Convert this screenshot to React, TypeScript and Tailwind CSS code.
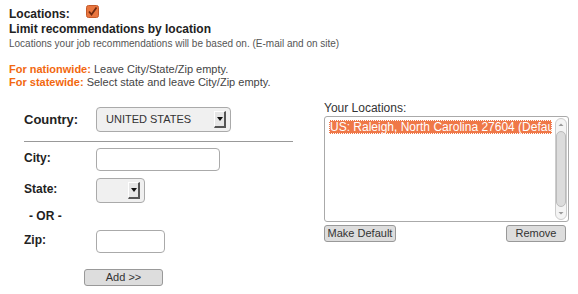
import React from 'react';

const SelectArrow = () => (
  <div className="w-[12px] h-[17px] bg-[#e6e6e6] border-t border-l border-[#fff] border-r-2 border-b-2 border-r-[#555] border-b-[#555] flex items-center justify-center">
    <svg width="6" height="4" viewBox="0 0 6 4">
      <path d="M0 0 L6 0 L3 4 Z" fill="#111" />
    </svg>
  </div>
);

const Field = ({ label, children }: { label: string; children: React.ReactNode }) => (
  <div className="flex items-center">
    <div className="w-[72px] text-[12px] font-bold mb-[4px]">{label}</div>
    {children}
  </div>
);

const App = () => {
  return (
    <div className="w-[578px] h-[294px] bg-white text-[#222] font-['Liberation_Sans',Arial,sans-serif] overflow-hidden">
      <div className="pl-[9px] pt-[5px]">
        <div className="flex items-start h-[17px]">
          <div className="w-[77px] mt-[2px] text-[12px] leading-[14px] font-bold">Locations:</div>
          <svg width="13" height="13" viewBox="0 0 13 13">
            <rect x="0.5" y="0.5" width="12" height="12" rx="2" fill="#e9763f" stroke="#c55a2b" />
            <path d="M3 6.5 L5.5 9.5 L10.5 2.5" fill="none" stroke="#6e2a10" strokeWidth="1.8" />
          </svg>
        </div>
        <div className="text-[12px] leading-[14px] font-bold">Limit recommendations by location</div>
        <div className="text-[10px] leading-[14px] text-[#555] mt-[1px]">
          Locations your job recommendations will be based on. (E-mail and on site)
        </div>
        <div className="mt-[12px] text-[11px] leading-[13px] text-[#444]">
          <div><span className="font-bold text-[#f2680f]">For nationwide:</span> Leave City/State/Zip empty.</div>
          <div><span className="font-bold text-[#f2680f]">For statewide:</span> Select state and leave City/Zip empty.</div>
        </div>
      </div>

      <div className="flex items-start">
        <div className="w-[300px] pl-[24px] pt-[18px]">
          <div className="flex items-center">
            <div className="w-[72px] text-[13px] font-bold">Country:</div>
            <div className="w-[135px] h-[25px] rounded-[4px] border border-[#aaa] bg-[#f0f0f0] flex items-center justify-between pl-[9px] pr-[4px] text-[11px] text-[#333]">
              <span>UNITED STATES</span>
              <SelectArrow />
            </div>
          </div>
          <div className="w-[269px] mt-[9px] border-t border-[#999]" />
          <div className="mt-[6px]">
            <Field label="City:">
              <div className="w-[124px] h-[23px] rounded-[4px] border border-[#aaa] bg-white" />
            </Field>
          </div>
          <div className="mt-[7px]">
            <Field label="State:">
              <div className="w-[49px] h-[25px] rounded-[4px] border border-[#aaa] bg-[#f0f0f0] flex items-center justify-end pr-[4px]">
                <SelectArrow />
              </div>
            </Field>
          </div>
          <div className="mt-[6px] pl-[5px] text-[12px] leading-[14px] font-bold">- OR -</div>
          <div className="mt-[7px]">
            <Field label="Zip:">
              <div className="w-[69px] h-[23px] rounded-[4px] border border-[#aaa] bg-white" />
            </Field>
          </div>
          <div className="mt-[16px] ml-[60px] w-[79px] h-[17px] rounded-[3px] border border-[#999] bg-[#dddddd] flex items-center justify-center text-[11px] text-[#333]">
            Add &gt;&gt;
          </div>
        </div>

        <div className="ml-[24px] w-[245px] pt-[12px]">
          <div className="text-[12px] leading-[14px] text-[#333]">Your Locations:</div>
          <div className="mt-[1px] h-[106px] rounded-[3px] border border-[#aaa] bg-white flex pl-[4px] pt-[3px] pr-[1px] pb-[1px]">
            <div className="flex-1 min-w-0">
              <div className="h-[14px] bg-[#ef7848] outline-1 outline-dotted outline-white -outline-offset-1 text-white text-[12px] leading-[14px] whitespace-nowrap overflow-hidden pl-[1px] mr-[3px]">
                US: Raleigh, North Carolina 27604 (Default)
              </div>
            </div>
            <div className="w-[12px] -mt-[2px] h-[102px] rounded-[6px] border border-[#ccc] bg-[#f4f4f4] flex flex-col items-center">
              <svg width="10" height="12" viewBox="0 0 10 12">
                <path d="M2.5 7 L5 4.5 L7.5 7 Z" fill="#999" />
              </svg>
              <div className="w-[10px] flex-1 rounded-[5px] border border-[#bbb] bg-[#dcdcdc]" />
              <svg width="10" height="12" viewBox="0 0 10 12">
                <path d="M2.5 5 L5 7.5 L7.5 5 Z" fill="#999" />
              </svg>
            </div>
          </div>
          <div className="mt-[3px] flex justify-between pr-[3px]">
            <div className="w-[72px] h-[17px] rounded-[3px] border border-[#999] bg-[#dddddd] flex items-center justify-center text-[11px] text-[#333]">
              Make Default
            </div>
            <div className="w-[60px] h-[17px] rounded-[3px] border border-[#999] bg-[#dddddd] flex items-center justify-center text-[11px] text-[#333]">
              Remove
            </div>
          </div>
        </div>
      </div>
    </div>
  );
};

export default App;
